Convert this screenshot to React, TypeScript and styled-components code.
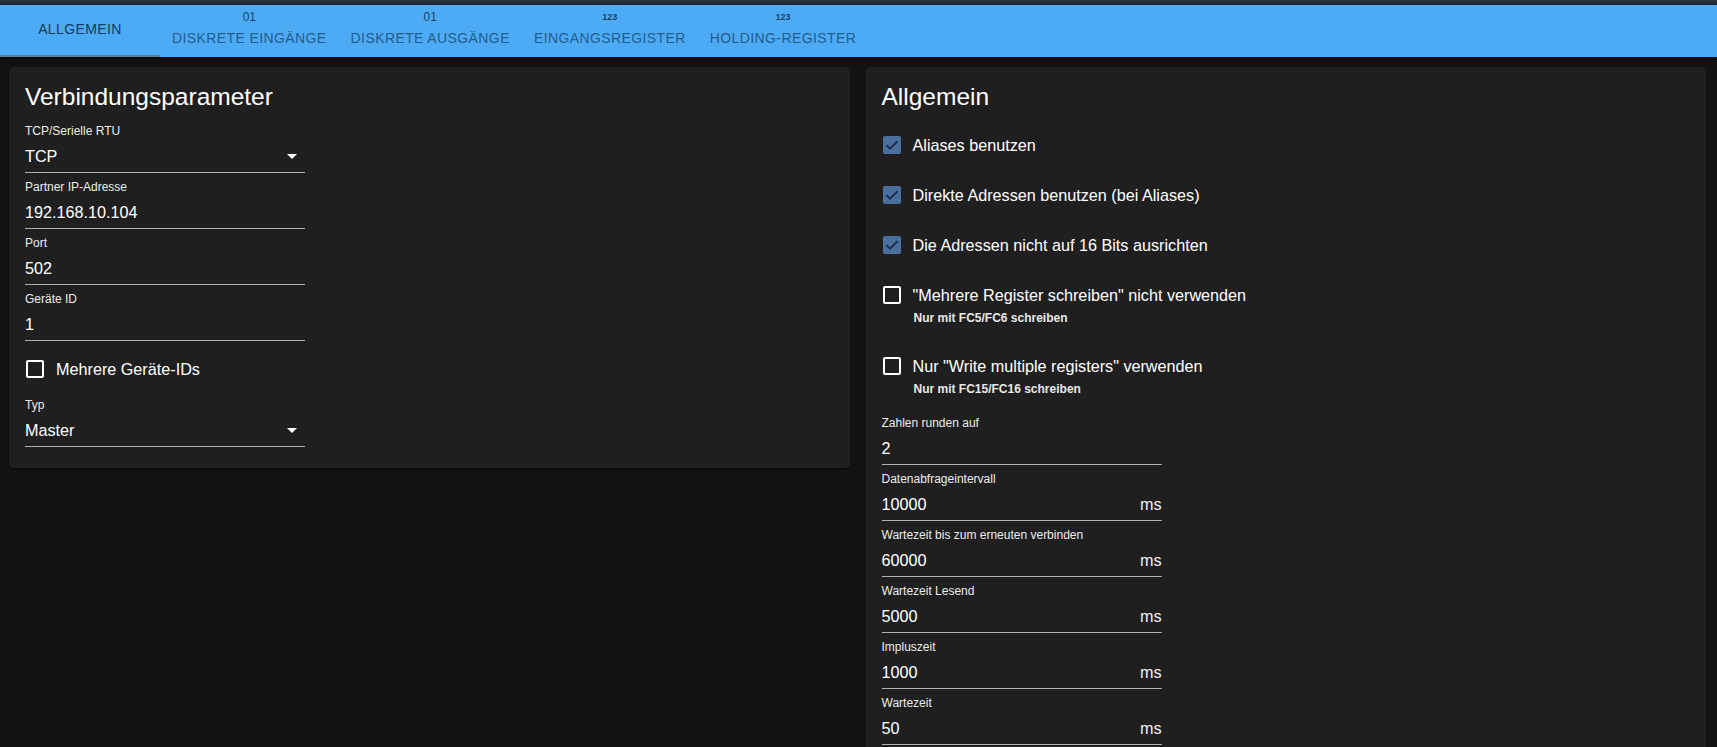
import React from "react";
import styled, { createGlobalStyle } from "styled-components";

const GlobalStyle = createGlobalStyle`
  html, body {
    margin: 0;
    padding: 0;
    height: 100%;
    overflow: hidden;
    background: #121212;
    font-family: "Liberation Sans", Arial, sans-serif;
    color: #fff;
  }
  #root { height: 100%; }
  * { box-sizing: border-box; }
`;

const Page = styled.div`
  display: flex;
  flex-direction: column;
  height: 100vh;
`;

const TopStrip = styled.div`
  height: 5px;
  background: linear-gradient(#2a3540, #1b2530);
  flex: none;
`;

const AppBar = styled.nav`
  height: 52px;
  flex: none;
  display: flex;
  background: #4dabf5;
  box-shadow: 0 2px 4px rgba(0, 0, 0, 0.6);
  position: relative;
  z-index: 2;
`;

const Tab = styled.div<{ $selected?: boolean; $hasIcon?: boolean }>`
  position: relative;
  min-width: 160px;
  padding: ${(p) => (p.$hasIcon ? "6px" : "16px")} 12px 0;
  display: flex;
  flex-direction: column;
  align-items: center;
  color: ${(p) => (p.$selected ? "#123b5c" : "#235d8c")};
  cursor: pointer;
  ${(p) =>
    p.$selected &&
    `
    &::after {
      content: "";
      position: absolute;
      left: 0;
      right: 0;
      bottom: 0;
      height: 2px;
      background: #5b7f9b;
    }
  `}
`;

const TabIcon = styled.span<{ $small?: boolean }>`
  display: block;
  height: 12px;
  line-height: 12px;
  font-size: ${(p) => (p.$small ? "9px" : "12px")};
  font-weight: ${(p) => (p.$small ? 700 : 400)};
  color: #1a4266;
  margin-bottom: 7px;
`;

const TabLabel = styled.span`
  display: block;
  font-size: 14px;
  line-height: 16px;
  letter-spacing: 0.4px;
  text-transform: uppercase;
  white-space: nowrap;
`;

const Content = styled.main`
  flex: 1;
  min-height: 0;
  overflow: hidden;
  display: grid;
  grid-template-columns: 1fr 1fr;
  column-gap: 16px;
  align-items: start;
  padding: 10px 11px 0 9px;
`;

const Card = styled.section`
  background: #1f1f1f;
  border-radius: 4px;
  box-shadow: 0 2px 1px -1px rgba(0, 0, 0, 0.2), 0 1px 1px 0 rgba(0, 0, 0, 0.14),
    0 1px 3px 0 rgba(0, 0, 0, 0.12);
  padding: 14px 16px 14px;
`;

const CardTitle = styled.h2`
  margin: 0 0 11px;
  font-size: 24.5px;
  line-height: 32px;
  font-weight: 400;
  color: #fff;
`;

const Field = styled.div`
  width: 280px;
  margin-bottom: 7px;
`;

const FieldLabel = styled.div`
  font-size: 12px;
  line-height: 14px;
  color: #ececec;
  margin-bottom: 2px;
  white-space: nowrap;
`;

const InputRow = styled.div`
  height: 33px;
  display: flex;
  align-items: center;
  border-bottom: 1px solid #b0b0b0;
`;

const Value = styled.span`
  flex: 1;
  font-size: 16.2px;
  line-height: 19px;
  color: #fff;
`;

const Adornment = styled.span`
  font-size: 16.2px;
  line-height: 19px;
  color: #f0f0f0;
`;

const ArrowBox = styled.svg`
  width: 24px;
  height: 24px;
  margin-right: 1px;
  fill: #fff;
`;

const CheckRow = styled.div`
  display: flex;
  flex-direction: column;
  margin: 0 0 8px -11px;
`;

const CheckLine = styled.label`
  display: flex;
  align-items: center;
  height: 42px;
  cursor: pointer;
`;

const CheckIconWrap = styled.span`
  padding: 9px;
  display: flex;
`;

const CheckText = styled.span`
  font-size: 16.2px;
  line-height: 19px;
  color: #fff;
  white-space: nowrap;
`;

const HelperText = styled.div`
  margin: -5px 0 12px 43px;
  font-size: 12px;
  line-height: 14px;
  font-weight: 700;
  color: #e8e8e8;
  white-space: nowrap;
`;

const CheckboxIcon = ({ checked }: { checked?: boolean }) =>
  checked ? (
    <svg width="24" height="24" viewBox="0 0 24 24">
      <rect x="3" y="3" width="18" height="18" rx="2" fill="#4a6f9c" />
      <path
        d="M6.5 12.2l3.5 3.5 7.5-7.5"
        fill="none"
        stroke="#1c2f46"
        strokeWidth="2"
      />
    </svg>
  ) : (
    <svg width="24" height="24" viewBox="0 0 24 24">
      <path
        fill="#fff"
        d="M19 5v14H5V5h14m0-2H5c-1.11 0-2 .9-2 2v14c0 1.1.89 2 2 2h14c1.1 0 2-.9 2-2V5c0-1.1-.9-2-2-2z"
      />
    </svg>
  );

type FieldProps = { label: string; value: string; select?: boolean; unit?: string };

const TextField = ({ label, value, select, unit }: FieldProps) => (
  <Field>
    <FieldLabel>{label}</FieldLabel>
    <InputRow>
      <Value>{value}</Value>
      {unit && <Adornment>{unit}</Adornment>}
      {select && (
        <ArrowBox viewBox="0 0 24 24">
          <path d="M7 10l5 5 5-5z" />
        </ArrowBox>
      )}
    </InputRow>
  </Field>
);

type CheckProps = { label: string; checked?: boolean; helper?: string };

const CheckField = ({ label, checked, helper }: CheckProps) => (
  <CheckRow>
    <CheckLine>
      <CheckIconWrap>
        <CheckboxIcon checked={checked} />
      </CheckIconWrap>
      <CheckText>{label}</CheckText>
    </CheckLine>
    {helper && <HelperText>{helper}</HelperText>}
  </CheckRow>
);

const tabs: { label: string; icon?: string; small?: boolean }[] = [
  { label: "Allgemein" },
  { label: "Diskrete Eingänge", icon: "01" },
  { label: "Diskrete Ausgänge", icon: "01" },
  { label: "Eingangsregister", icon: "123", small: true },
  { label: "Holding-Register", icon: "123", small: true },
];

export default function App() {
  return (
    <Page>
      <GlobalStyle />
      <TopStrip />
      <AppBar>
        {tabs.map((t, i) => (
          <Tab key={t.label} $selected={i === 0} $hasIcon={!!t.icon}>
            {t.icon && <TabIcon $small={t.small}>{t.icon}</TabIcon>}
            <TabLabel>{t.label}</TabLabel>
          </Tab>
        ))}
      </AppBar>
      <Content>
        <Card>
          <CardTitle>Verbindungsparameter</CardTitle>
          <TextField label="TCP/Serielle RTU" value="TCP" select />
          <TextField label="Partner IP-Adresse" value="192.168.10.104" />
          <TextField label="Port" value="502" />
          <TextField label="Geräte ID" value="1" />
          <CheckField label="Mehrere Geräte-IDs" />
          <TextField label="Typ" value="Master" select />
        </Card>
        <Card>
          <CardTitle>Allgemein</CardTitle>
          <CheckField label="Aliases benutzen" checked />
          <CheckField label="Direkte Adressen benutzen (bei Aliases)" checked />
          <CheckField label="Die Adressen nicht auf 16 Bits ausrichten" checked />
          <CheckField
            label={'"Mehrere Register schreiben" nicht verwenden'}
            helper="Nur mit FC5/FC6 schreiben"
          />
          <CheckField
            label={'Nur "Write multiple registers" verwenden'}
            helper="Nur mit FC15/FC16 schreiben"
          />
          <TextField label="Zahlen runden auf" value="2" />
          <TextField label="Datenabfrageintervall" value="10000" unit="ms" />
          <TextField label="Wartezeit bis zum erneuten verbinden" value="60000" unit="ms" />
          <TextField label="Wartezeit Lesend" value="5000" unit="ms" />
          <TextField label="Impluszeit" value="1000" unit="ms" />
          <TextField label="Wartezeit" value="50" unit="ms" />
        </Card>
      </Content>
    </Page>
  );
}
